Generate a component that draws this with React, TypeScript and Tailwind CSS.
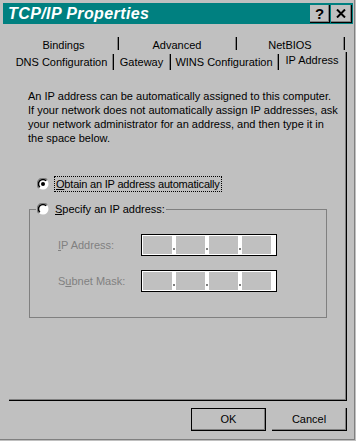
import React from 'react';

function Radio({ checked = false }: { checked?: boolean }) {
  return (
    <svg width="12" height="12" viewBox="0 0 12 12" className="shrink-0">
      <circle cx="6" cy="6" r="5.5" fill="#ffffff" />
      <path d="M10.2 1.8 A5.6 5.6 0 0 0 1.8 10.2" fill="none" stroke="#808080" strokeWidth="1.2" />
      <path d="M9.2 2.8 A4.4 4.4 0 0 0 2.8 9.2" fill="none" stroke="#000000" strokeWidth="1.6" />
      {checked && <circle cx="6" cy="6" r="2" fill="#000000" />}
    </svg>
  );
}

function IpBox() {
  return (
    <div className="flex h-[22px] w-[136px] border border-black bg-white p-[1px] pr-[4px]">
      {[0, 1, 2, 3].map((i) => (
        <div key={i} className="flex">
          <div className="h-full w-[29px] bg-[#c0c0c0]" />
          {i < 3 && (
            <div className="flex w-[4px] items-end pb-[4px]">
              <div className="ml-[1px] h-[2px] w-[2px] bg-[#808080]" />
            </div>
          )}
        </div>
      ))}
    </div>
  );
}

function Tab({ label, width, selected = false }: { label: string; width: string; selected?: boolean }) {
  return (
    <div className={`flex h-full ${width}`}>
      <div className={`flex flex-1 justify-center ${selected ? 'pt-[1px]' : 'pt-[3px]'}`}>
        <span className="leading-[14px]">{label}</span>
      </div>
      <div className={`w-[2px] border-l border-[#808080] bg-black ${selected ? 'mt-0' : 'my-[2px]'}`} />
    </div>
  );
}

export default function App() {
  return (
    <div className="h-[441px] w-[356px] overflow-hidden bg-[#c0c0c0] font-['Liberation_Sans',Arial,sans-serif] text-[11px] text-black">
      <div className="flex h-[440px] w-[355px] flex-col border-b border-r border-[#808080] pl-[3px] pr-[1px] pt-[3px]">
        {/* Title bar */}
        <div className="flex h-[21px] items-center justify-between bg-[#008080] pl-[5px] pr-[1px]">
          <span className="text-[16px] font-bold italic leading-none tracking-[0.4px] text-white">
            TCP/IP Properties
          </span>
          <div className="flex gap-[1px]">
            <div className="flex h-[18px] w-[20px] items-center justify-center border-b border-r border-black bg-[#c0c0c0] shadow-[inset_-1px_-1px_0_#808080]">
              <span className="text-[15px] font-bold leading-none">?</span>
            </div>
            <div className="flex h-[18px] w-[21px] items-center justify-center border-b border-r border-black bg-[#c0c0c0] shadow-[inset_-1px_-1px_0_#808080]">
              <svg width="10" height="9" viewBox="0 0 10 9">
                <path d="M1 0.5 L9 8.5 M9 0.5 L1 8.5" stroke="#000" strokeWidth="2" />
              </svg>
            </div>
          </div>
        </div>

        {/* Tabs, back row */}
        <div className="ml-[7px] mt-[11px] flex h-[17px]">
          <Tab label="Bindings" width="w-[109px]" />
          <Tab label="Advanced" width="w-[118px]" />
          <Tab label="NetBIOS" width="w-[108px]" />
        </div>

        {/* Tabs, front row */}
        <div className="ml-[8px] flex h-[20px]">
          <Tab label="DNS Configuration" width="w-[103px]" />
          <Tab label="Gateway" width="w-[57px]" />
          <Tab label="WINS Configuration" width="w-[108px]" />
          <Tab label="IP Address" width="w-[68px]" selected />
        </div>

        {/* Panel */}
        <div className="ml-[6px] flex h-[329px] w-[338px] flex-col border-b border-r border-black pl-[19px] pt-[17px] shadow-[inset_-1px_-1px_0_#808080]">
          <p className="leading-[14px]">
            An IP address can be automatically assigned to this computer.
            <br />
            If your network does not automatically assign IP addresses, ask
            <br />
            your network administrator for an address, and then type it in
            <br />
            the space below.
          </p>

          <div className="ml-[9px] mt-[31px] flex items-center gap-[5px]">
            <Radio checked />
            <span className="border border-dotted border-black px-[1px] leading-[14px] tracking-[-0.2px]">
              <span className="underline">O</span>btain an IP address automatically
            </span>
          </div>

          {/* Group box */}
          <div className="relative ml-[1px] mt-[17px] h-[109px] w-[298px] border border-[#808080]">
            <div className="absolute left-[6px] top-[-8px] flex items-center gap-[6px] bg-[#c0c0c0] px-[1px]">
              <Radio />
              <span className="leading-[14px]">
                <span className="underline">S</span>pecify an IP address:
              </span>
            </div>

            <div className="flex flex-col gap-[14px] pl-[28px] pt-[24px] text-[#808080]">
              <div className="flex h-[22px] items-center">
                <span className="w-[83px]">
                  <span className="underline">I</span>P Address:
                </span>
                <IpBox />
              </div>
              <div className="flex h-[22px] items-center">
                <span className="w-[83px]">
                  S<span className="underline">u</span>bnet Mask:
                </span>
                <IpBox />
              </div>
            </div>
          </div>
        </div>

        {/* Buttons */}
        <div className="ml-[6px] mt-[7px] flex w-[338px] justify-end gap-[6px]">
          <button className="flex h-[23px] w-[75px] items-center justify-center border border-black bg-[#c0c0c0] shadow-[inset_-1px_-1px_0_#808080]">
            OK
          </button>
          <button className="flex h-[23px] w-[75px] items-center justify-center border-b border-r border-black bg-[#c0c0c0] shadow-[inset_-1px_-1px_0_#808080]">
            Cancel
          </button>
        </div>
      </div>
    </div>
  );
}
